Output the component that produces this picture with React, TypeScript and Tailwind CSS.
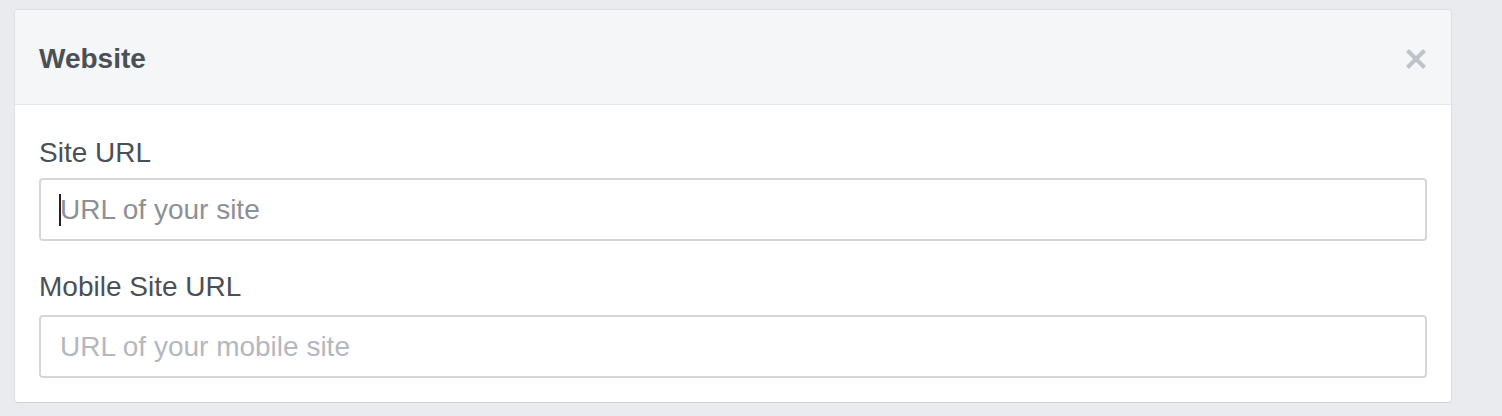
import { useState } from "react";

const font = { fontFamily: '"Liberation Sans", Arial, Helvetica, sans-serif' };

function CloseIcon() {
  return (
    <svg width="20" height="20" viewBox="0 0 20 20" aria-hidden="true">
      <path d="M1.5 1.5 L18.5 18.5 M18.5 1.5 L1.5 18.5" stroke="#bec2c9" strokeWidth="4" strokeLinecap="butt" />
    </svg>
  );
}

export default function App() {
  const [site, setSite] = useState("");
  const [mobile, setMobile] = useState("");

  return (
    <div className="min-h-[416px] w-full bg-[#e9ebee] pl-[14px] pt-[9px]" style={font}>
      <div className="w-[1438px] rounded-[4px] border border-[#dddfe2] border-b-[#cdd0d4] bg-white overflow-hidden">
        {/* Header */}
        <div className="h-[95px] flex items-center justify-between bg-[#f5f6f7] border-b border-[#e5e6e9] pl-[24px] pr-[25px]">
          <h2 className="text-[28px] leading-[32px] font-bold text-[#4b4f56] pt-[3px]">Website</h2>
          <button type="button" className="w-[20px] h-[20px] flex items-center justify-center mt-[3px]">
            <CloseIcon />
          </button>
        </div>

        {/* Form */}
        <div className="pl-[24px] pr-[24px] pt-[32px] pb-[24px]">
          <label className="block text-[28px] leading-[32px] text-[#4b4f56]">Site URL</label>
          <div className="relative mt-[9px]">
            <input
              type="text"
              value={site}
              onChange={(e) => setSite(e.target.value)}
              placeholder="URL of your site"
              className="w-full h-[63px] rounded-[4px] border-2 border-[#d3d6db] bg-white pl-[19px] text-[28px] text-[#1d2129] outline-none placeholder:text-[#8d9096]"
            />
            {site === "" && (
              <span className="absolute left-[20px] top-[16px] w-[2px] h-[32px] bg-[#1d2129]" />
            )}
          </div>

          <label className="block mt-[30px] text-[28px] leading-[32px] text-[#4b4f56]">Mobile Site URL</label>
          <input
            type="text"
            value={mobile}
            onChange={(e) => setMobile(e.target.value)}
            placeholder="URL of your mobile site"
            className="mt-[12px] w-full h-[63px] rounded-[4px] border-2 border-[#d3d6db] bg-white pl-[19px] text-[28px] text-[#1d2129] outline-none placeholder:text-[#b4b8be]"
          />
        </div>
      </div>
    </div>
  );
}
